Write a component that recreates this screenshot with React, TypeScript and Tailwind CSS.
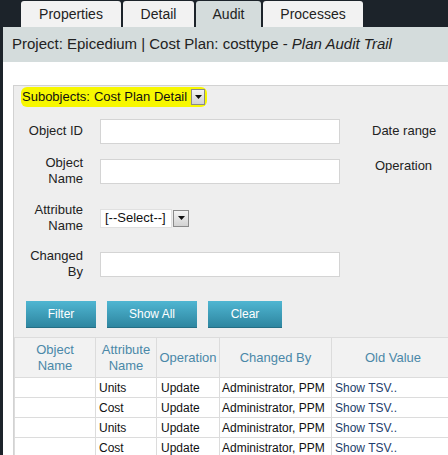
import React from 'react';

const tabs = [
  { label: 'Properties', w: 'w-[100px]', active: false },
  { label: 'Detail', w: 'w-[71px]', active: false },
  { label: 'Audit', w: 'w-[65px]', active: true },
  { label: 'Processes', w: 'w-[100px]', active: false },
];

const rows = [
  { attr: 'Units', op: 'Update' },
  { attr: 'Cost', op: 'Update' },
  { attr: 'Units', op: 'Update' },
  { attr: 'Cost', op: 'Update' },
];

const Arrow = ({ className }: { className: string }) => (
  <span className={`flex items-center justify-center border border-[#8a8a8a] bg-gradient-to-b from-[#f4f4f4] to-[#d2d2d2] ${className}`}>
    <svg width="7" height="4" viewBox="0 0 7 4">
      <path d="M0 0 H7 L3.5 4 Z" fill="#111" />
    </svg>
  </span>
);

const Label = ({ children }: { children: React.ReactNode }) => (
  <div className="w-[69px] text-right text-[13px] leading-[16px] text-[#222]">{children}</div>
);

const TextInput = () => <div className="ml-[17px] w-[240px] h-[25px] bg-white border border-[#d4d4d4]" />;

const Btn = ({ label, w }: { label: string; w: string }) => (
  <button className={`${w} h-[27px] text-[12px] text-white bg-gradient-to-b from-[#4fb6d2] to-[#2e86a0] border-b border-[#256f85]`}>
    {label}
  </button>
);

export default function App() {
  return (
    <div className="w-[448px] h-[455px] overflow-hidden bg-white font-['Liberation_Sans',Arial,sans-serif]">
      {/* tabs */}
      <div className="h-[27px] bg-[#1c232a] flex items-end pl-[21px] gap-[2px]">
        {tabs.map(t => (
          <div
            key={t.label}
            className={`${t.w} h-[26px] rounded-t-[3px] flex items-center justify-center text-[14px] text-[#222] ${t.active ? 'bg-[#d4dcdc]' : 'bg-[#f2f2f2]'}`}
          >
            {t.label}
          </div>
        ))}
      </div>

      <div className="border-l-[3px] border-[#1c232a] h-[428px]">
        <div className="h-[35px] bg-[#d4dcdc] flex items-center pl-[9px] text-[15px] text-[#222]">
          Project: Epicedium | Cost Plan: costtype -&nbsp;<i>Plan Audit Trail</i>
        </div>
        <div className="h-[23px]" />

        {/* panel */}
        <div className="ml-[10px] h-[370px] bg-[#eeeeee] border-t border-l border-[#d2d2d2]">
          <div className="h-[21px] flex items-center pl-[7px]">
            <div className="flex items-center h-[20px] bg-[#f7f700] rounded-[6px] pl-[1px] pr-[2px]">
              <span className="text-[13px] text-[#111]">Subobjects:</span>
              <span className="ml-[4px] text-[13px] text-[#111]">Cost Plan Detail</span>
              <Arrow className="ml-[4px] w-[14px] h-[16px]" />
            </div>
          </div>

          <div className="mt-[8px] h-[32px] flex items-center">
            <Label>Object ID</Label>
            <TextInput />
            <div className="ml-[32px] text-[13px] text-[#222]">Date range</div>
          </div>

          <div className="mt-[6px] h-[36px] flex items-center">
            <Label>
              Object
              <br />
              Name
            </Label>
            <TextInput />
            <div className="ml-[35px] text-[13px] text-[#222] -mt-[10px]">Operation</div>
          </div>

          <div className="mt-[11px] h-[36px] flex items-center">
            <Label>
              Attribute
              <br />
              Name
            </Label>
            <div className="ml-[17px] flex items-center h-[19px]">
              <span className="h-[19px] w-[72px] bg-white border border-[#e0e0e0] pl-[4px] flex items-center text-[13px] text-[#111]">
                [--Select--]
              </span>
              <Arrow className="ml-[1px] w-[16px] h-[17px]" />
            </div>
          </div>

          <div className="mt-[10px] h-[36px] flex items-center">
            <Label>
              Changed
              <br />
              By
            </Label>
            <TextInput />
          </div>

          <div className="mt-[19px] flex gap-[11px] pl-[12px]">
            <Btn label="Filter" w="w-[70px]" />
            <Btn label="Show All" w="w-[90px]" />
            <Btn label="Clear" w="w-[74px]" />
          </div>

          <table className="mt-[9px] border-collapse text-[12px] text-[#111] table-fixed w-[440px]">
            <colgroup>
              <col className="w-[81px]" />
              <col className="w-[61px]" />
              <col className="w-[63px]" />
              <col className="w-[112px]" />
              <col className="w-[123px]" />
            </colgroup>
            <thead>
              <tr className="h-[40px] bg-[#f2f2f2] text-[13px] text-[#4a88a8] leading-[16px]">
                <th className="font-normal border border-[#dcdcdc]">Object<br />Name</th>
                <th className="font-normal border border-[#dcdcdc]">Attribute<br />Name</th>
                <th className="font-normal border border-[#dcdcdc]">Operation</th>
                <th className="font-normal border border-[#dcdcdc]">Changed By</th>
                <th className="font-normal border border-[#dcdcdc]">Old Value</th>
              </tr>
            </thead>
            <tbody>
              {rows.map((r, i) => (
                <tr key={i} className="h-[20px] bg-white">
                  <td className="border border-[#dcdcdc]" />
                  <td className="border border-[#dcdcdc] pl-[3px]">{r.attr}</td>
                  <td className="border border-[#dcdcdc] pl-[4px]">{r.op}</td>
                  <td className="border border-[#dcdcdc] pl-[2px] whitespace-nowrap">Administrator, PPM</td>
                  <td className="border border-[#dcdcdc] pl-[3px] text-[#1d3d6b]">Show TSV..</td>
                </tr>
              ))}
            </tbody>
          </table>
        </div>
      </div>
    </div>
  );
}
